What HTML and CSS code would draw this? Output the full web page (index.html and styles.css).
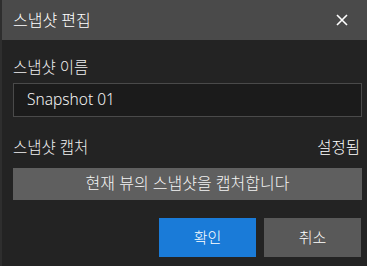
FILE: index.html
```html
<!DOCTYPE html>
<html lang="ko">
<head>
  <meta charset="UTF-8">
  <title>스냅샷 편집</title>
  <link rel="stylesheet" href="styles.css">
</head>
<body>
  <div class="dialog">
    <div class="titlebar">
      <span class="title">스냅샷 편집</span>
      <svg class="close" width="12" height="12" viewBox="0 0 12 12">
        <path d="M1 1 L11 11 M11 1 L1 11" stroke="#ffffff" stroke-width="1.6" fill="none"/>
      </svg>
    </div>
    <div class="content">
      <div class="label">스냅샷 이름</div>
      <div class="input">Snapshot 01</div>
      <div class="row">
        <span class="label">스냅샷 캡처</span>
        <span class="status">설정됨</span>
      </div>
      <div class="capture">현재 뷰의 스냅샷을 캡처합니다</div>
      <div class="actions">
        <div class="btn ok">확인</div>
        <div class="btn cancel">취소</div>
      </div>
    </div>
  </div>
</body>
</html>
```

FILE: styles.css
```css
body {
  margin: 0;
  background-color: #232323;
  font-family: "Noto Sans", "Noto Sans CJK KR", sans-serif;
  font-weight: 300;
  color: #ffffff;
}

.dialog {
  width: 365px;
  height: 266px;
  margin-left: 2px;
  background-color: #232323;
  box-shadow: -2px 0 0 #2e2e2e;
}

.titlebar {
  height: 40px;
  background-color: #4a4a4a;
  display: flex;
  align-items: center;
  justify-content: space-between;
  padding: 0 19px 0 11px;
}

.title {
  font-size: 16px;
  margin-top: -2px;
}

.close {
  margin-top: -1px;
}

.content {
  padding: 16px 5px 0 11px;
}

.label {
  font-size: 15.5px;
  line-height: 22px;
  color: #f0f0f0;
}

.input {
  margin-top: 5px;
  border: 1px solid #4a4a4a;
  background-color: #1b1b1b;
  box-sizing: border-box;
  height: 34px;
  padding-left: 13px;
  font-size: 15.5px;
  line-height: 31px;
  color: #f4f4f4;
}

.row {
  display: flex;
  justify-content: space-between;
  margin-top: 19px;
  padding-right: 2px;
}

.status {
  font-size: 15.5px;
  line-height: 22px;
}

.capture {
  margin-top: 10px;
  height: 32px;
  background-color: #5f5f5f;
  text-align: center;
  font-size: 16px;
  line-height: 31px;
  color: #f4f4f4;
}

.actions {
  display: flex;
  justify-content: flex-end;
  gap: 8px;
  margin-top: 18px;
  padding-right: 1px;
}

.btn {
  width: 97px;
  height: 39px;
  text-align: center;
  font-size: 15px;
  line-height: 38px;
}

.ok {
  background-color: #1a7bd8;
}

.cancel {
  background-color: #595959;
}
```
